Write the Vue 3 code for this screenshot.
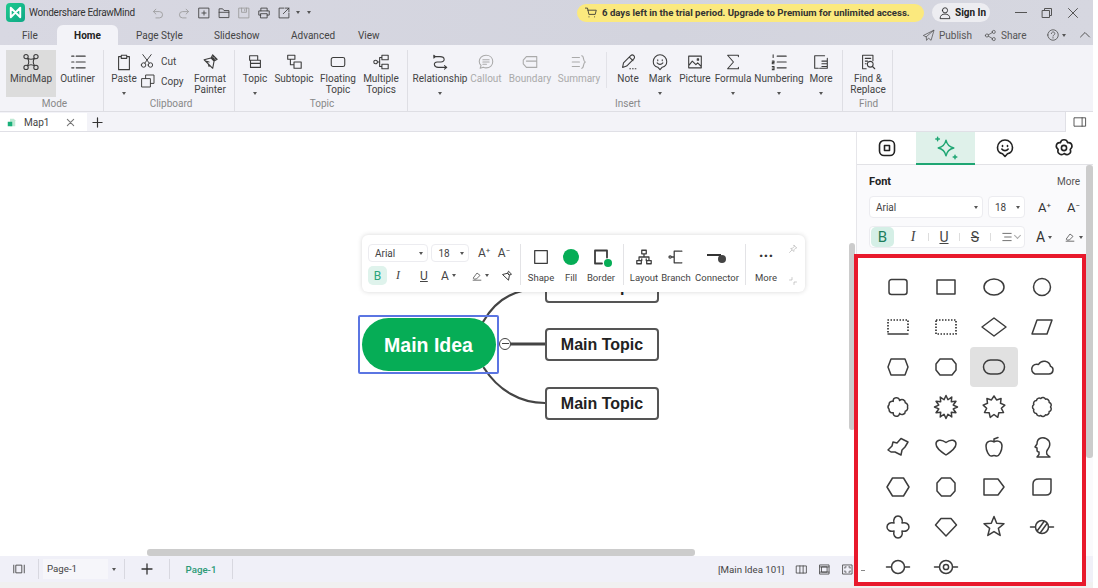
<script setup>
const c = (x, y, r) => `M${x - r} ${y}a${r} ${r} 0 1 0 ${2 * r} 0a${r} ${r} 0 1 0 ${-2 * r} 0z`
const p = {
  mindmap: c(4.5, 4, 2.4) + c(15.5, 4, 2.4) + c(4.5, 16, 2.4) + c(15.5, 16, 2.4) + 'M6.5 5.5C8 7.5 12 7.5 13.5 5.5M6.5 14.5C8 12.5 12 12.5 13.5 14.5M6 6C8 8 8 12 6 14M14 6C12 8 12 12 14 14',
  outliner: 'M8 3.5h10M8 10h10M8 16.5h10M3 3.5h2.5M3 10h2.5M3 16.5h2.5',
  paste: 'M7 4H4v14.5h12V4h-3M7 2.5h6v3.5H7z',
  scissors: c(4.5, 15, 2.8) + c(13, 15, 2.8) + 'M6 12.6L14 2M11.5 12.6L3.5 2',
  copy: 'M7 7V2.5h10.5V13H13M2.5 7H13v10.5H2.5z',
  painter: 'M13 2l5 5-3 1.5-3.5-3.5zM14 3.500l2.500 2.500-1.500 1-2-2zM11 5.500l3.500 3.500-1.500 8-9.500-9.500zM5 9l4 1M9 15l-1-3',
  topic: 'M4 3h9v5H4zM5 8h11v8H5zM5 11.5h11',
  subtopic: 'M3 2.5h8v4.5H3zM6 7v6h4M10 10h8v7h-8z',
  floating: 'M4.5 5h11a2 2 0 0 1 2 2v6a2 2 0 0 1-2 2h-11a2 2 0 0 1-2-2V7a2 2 0 0 1 2-2z',
  multiple: c(4, 10, 2) + 'M11 2.5h7v5h-7zM11 12.5h7v5h-7zM6 10h2.5M8.5 5v10M8.5 5H11M8.5 15H11',
  relation: 'M3 4h7c6 0 6 6 1 6H7c-5 0-4 6 1 6h9M15 14l2.5 2-2.5 2M3 2.5l2 1.5-2 1.5',
  callout: 'M10 2.5c4.5 0 7.5 3 7.5 7s-3 7-7.5 7c-1 0-2-.2-3-.6L3.5 17l1-3.2C3 12.5 2.5 11 2.5 9.5c0-4 3-7 7.5-7zM6.5 7.5h7M6.5 10h7M6.5 12.5h4',
  boundary: 'M6 4h11.5v12H6L2.5 12V8zM6 9h11.5',
  summary: 'M2.5 5h8M2.5 10h8M2.5 15h8M13 3c3 0 1 6 4 7-3 1-1 7-4 7',
  note: 'M4 16l1-5 8-8c1-1 2.5-1 3.5 0s1 2.5 0 3.5l-8 8zM11.5 4.5l4 4M12 17.5h.8M15 17.5h.8M18 17.5h.8',
  mark: 'M10 18.5l-2.5-2.7C4 15 2.5 12.5 2.5 9.5a7.5 7.5 0 0 1 15 0c0 3-1.5 5.5-5 6.3zM7.5 7.5v1M12.5 7.5v1M6.8 11c1.8 2.2 4.6 2.2 6.4 0',
  picture: 'M3 3.5h14v13H3zM3 14l4-5 4 4 2-2 4 4M12.5 6.5h1.5v1.5h-1.5z',
  formula: 'M16 4V2.5H4l6.5 7.5L4 17.5h12V16',
  numbering: 'M8 3.5h10M8 10h10M8 16.5h10M3.5 2v3M2.5 9h2v1.5h-2V12h2M2.5 15h2v3.5h-2M2.5 16.7h2',
  more: 'M14 3H3v14h4M8.5 17H17V6M11 9h6M11 12h6M11 15h6',
  find: 'M15.5 8.5V2.5H4v15h4M7 6h6M7 9h2.5M7 12h1' + c(12.5, 12.5, 3.2) + 'M15 15l2.5 2.5',
  undo: 'M4 8h8a4.5 4.5 0 0 1 0 9H7M7 4.5L3.5 8 7 11.5',
  redo: 'M16 8H8a4.5 4.5 0 0 0 0 9h5M13 4.5L16.5 8 13 11.5',
  newf: 'M3 3h14v14H3zM10 7v6M7 10h6',
  open: 'M3 16V4h5l2 2.5h7V16zM3 9h14',
  save: 'M3 3h14v14H3zM6.5 3v6h7V3M11 5v2',
  print: 'M5.5 7V3h9v4M5.5 13H2.5V7h15v6h-3M5.5 11h9v6h-9z',
  exp: 'M10 3H3v14h14v-7M9 11L17 3M12 3h5v5',
  cart: 'M2 3h3l2 9h9l1.5-6H5.5M7 15.5h.2M15 15.5h.2',
  user: c(10, 6.2, 3.7) + 'M3 17.5c0-4 3-6 7-6s7 2 7 6z',
  publish: 'M18 2L2 10l4.5 2 .5 5.5 3-3.5 3.5 3zM18 2L6.5 12',
  share: c(4.5, 10, 2.4) + c(15, 4.5, 2.4) + c(15, 15.5, 2.4) + 'M6.6 9l6.2-3.5M6.6 11l6.2 3.5',
  help: c(10, 10, 7.5) + 'M7.6 8c0-3.2 5-3.2 5 0 0 2-2.6 1.8-2.6 3.6M10 13.6v.8',
  pageList: 'M6 4.5h8v11H6zM2.5 4.5v11M17.5 4.5v11',
  book: 'M2.5 4.5h15v11h-15zM7.5 4.5v11M12.5 4.5v11',
  fit: 'M3 3h14v14H3zM6 6h8v8H6zM3 6h14M3 14h14',
  full: 'M3 3h14v14H3zM6 8V6h2M12 6h2v2M14 12v2h-2M8 14H6v-2',
  panel: 'M2 4h16v12H2zM13 4v12',
  tabShape: 'M7 2.5h6a4.5 4.5 0 0 1 4.5 4.5v6a4.5 4.5 0 0 1-4.5 4.5H7A4.5 4.5 0 0 1 2.5 13V7A4.5 4.5 0 0 1 7 2.5zM7.5 7.5h5v5h-5z',
  sparkle: 'M10 3.500c.8 3.800 2.700 5.700 6.500 6.500-3.800.8-5.700 2.700-6.500 6.500-.8-3.800-2.700-5.700-6.500-6.500 3.800-.8 5.700-2.700 6.500-6.500zM3 1v3M1.500 2.500h3M17.500 16v3M16 17.500h3',
  flower: 'M10 1.800c2 0 3.300 1.400 3.700 2.900 1.700-.3 3.600.5 4.100 2.400.6 1.900-.4 3.400-1.600 4.200.7 1.500.5 3.500-1.100 4.600-1.600 1.100-3.500.7-4.900-.4-1.200 1.100-3.100 1.500-4.700.4-1.600-1.100-1.900-3.100-1.300-4.600C3 10.500 1.900 9 2.400 7.100 3 5.200 4.800 4.400 6.400 4.700 6.800 3.200 8 1.800 10 1.800z' + c(10, 10, 2.6),
  shape: 'M3 3h14v14H3z',
  border: 'M4 3.500h12M4 3.500v13M16 3.500v7M4 16.500h7',
  layout: 'M7.500 2.500h5v4h-5zM2 14h5v3.500H2zM13 14h5v3.500h-5zM10 6.500V10M4.500 14v-4h11v4M7.500 14v-2M12.500 14v-2',
  branch: c(3.500, 10, 1.300) + 'M5 10h3M8 3.500v13M8 3.500h6M8 16.500h6M15 3.500h1.500M15 16.500h1.500',
  pin: 'M12 2.500l5.500 5.500-2.500.5-3 3-.5 3.500L5.500 9l3.500-.5 3-3zM8 12l-5 5',
  collapse: 'M3 8h5V3M12 17v-5h5',
  clear: 'M13 2.500l4.500 4.500-3 1.500-3-3zM11 6l3 3-1.500 8L3 8z',
  pen: 'M4 13l6-8 5 4-6 6H6zM3.500 17h13'
}

const star = (n, R, r) => {
  let s = ''
  for (let i = 0; i < n * 2; i++) {
    const a = -Math.PI / 2 + (i * Math.PI) / n
    const q = i % 2 ? r : R
    s += (i ? 'L' : 'M') + (q * Math.cos(a)).toFixed(2) + ' ' + (q * Math.sin(a)).toFixed(2)
  }
  return s + 'Z'
}
const scallop = (n, rx, ry, b) => {
  let s = ''
  for (let i = 0; i <= n; i++) {
    const a = (i * 2 * Math.PI) / n
    const pt = (rx * Math.cos(a)).toFixed(2) + ' ' + (ry * Math.sin(a)).toFixed(2)
    s += i ? `A${b} ${b} 0 0 1 ${pt}` : 'M' + pt
  }
  return s + 'Z'
}
const shapes = [
  { d: 'M-6.500-7.500h13a2.500 2.500 0 0 1 2.500 2.500v10a2.500 2.500 0 0 1-2.500 2.500h-13a2.500 2.500 0 0 1-2.500-2.500v-10a2.500 2.500 0 0 1 2.500-2.500z' },
  { d: 'M-9-7H9V7H-9z' },
  { d: 'M-10 0a10 8 0 1 0 20 0a10 8 0 1 0-20 0z' },
  { d: c(0, 0, 8.500) },
  { d: 'M-10 7H10', dash: 'M-10 5.500V-7H10V5.500' },
  { dash: 'M-10-7H10V7H-10z' },
  { d: 'M0-9L12 0 0 9-12 0z' },
  { d: 'M-10 7L-5-7H10L5 7z' },
  { d: 'M-10 0L-7-8H7L10 0 7 8H-7z' },
  { d: 'M-10-3L-6-8H6L10-3V3L6 8H-6L-10 3z' },
  { d: 'M-3.500-7h7a7 7 0 0 1 0 14h-7a7 7 0 0 1 0-14z', on: true },
  { d: 'M-7 7H7a4 4 0 0 0 1.500-7.700A6.500 6.500 0 0 0-3.500-2.500 4.800 4.800 0 0 0-7 7Z' },
  { d: scallop(9, 9.500, 6.500, 3.200) },
  { d: star(12, 11.500, 7.500) },
  { d: star(9, 11, 7.500) },
  { d: scallop(11, 8.500, 8.500, 2.800) },
  { d: 'M-10 3L-6-1-5-5-1-4 3-8.500 10-5 7 0 4 3 3 8-3 5-7 5Z' },
  { d: 'M0 8C-6 4-10 1-10-3-10-7-5-8.500 0-4.500 5-8.500 10-7 10-3 10 1 6 4 0 8Z' },
  { d: 'M0-5C-3-7-8-6-8-1-8 4-5 9-3 9-1.500 9-1 8.500 0 8.500 1 8.500 1.500 9 3 9 5 9 8 4 8-1 8-6 3-7 0-5ZM0-5V-8M0-8L4-9.500' },
  { d: 'M-5 10H8L5 7.500Q4 4 6 2 9-2 7-6 4-10-1-9-5-8-5-3L-7 0-5 1V3Q-5 5-3 5V7.500Z' },
  { d: 'M-11 0L-5.500-9H5.500L11 0 5.500 9H-5.500z' },
  { d: 'M-9-4L-4.500-9H4.500L9-4V4L4.500 9H-4.500L-9 4z' },
  { d: 'M-10-8H4L10 0 4 8H-10z' },
  { d: 'M-3-8H9V3Q9 8 4 8H-9V-3Q-9-8-3-8Z' },
  { d: 'M-4-4C-5-8-3-11 0-11 3-11 5-8 4-4 8-5 11-3 11 0 11 3 8 5 4 4 5 8 3 11 0 11-3 11-5 8-4 4-8 5-11 3-11 0-11-3-8-5-4-4Z' },
  { d: 'M-5-8.500H5L10.500-2 0 9-10.500-2Z' },
  { d: star(5, 10.500, 4.600) },
  { d: c(0, 0, 6.500) + 'M-11.500 0H-6.500M6.500 0H11.500M-4.500 3.500L2 -5.500M-1.500 5.500L5 -3.500' },
  { d: c(0, 0, 6.500) + 'M-11.500 0H-6.500M6.500 0H11.500' },
  { d: c(0, 0, 6.500) + c(0, 0, 2.600) + 'M-11.500 0H-6.500M6.500 0H11.500' }
]

const groups = [
  { label: 'Mode', w: 104, pad: 6, items: [
    { t: 'MindMap', w: 50, i: 'mindmap', active: true },
    { t: 'Outliner', w: 43, i: 'outliner' }
  ] },
  { label: 'Clipboard', w: 131, pad: 4, items: [
    { t: 'Paste', w: 32, i: 'paste', caret: true },
    { stack: true, w: 48 },
    { t: 'Format\nPainter', w: 44, i: 'painter' }
  ] },
  { label: 'Topic', w: 173, pad: 2, items: [
    { t: 'Topic', w: 36, i: 'topic', caret: true },
    { t: 'Subtopic', w: 42, i: 'subtopic' },
    { t: 'Floating\nTopic', w: 46, i: 'floating' },
    { t: 'Multiple\nTopics', w: 40, i: 'multiple' }
  ] },
  { label: 'Insert', w: 435, pad: 2, labelLeft: 205, items: [
    { t: 'Relationship', w: 60, i: 'relation', caret: true },
    { t: 'Callout', w: 32, i: 'callout', off: true },
    { t: 'Boundary', w: 56, i: 'boundary', off: true },
    { t: 'Summary', w: 42, i: 'summary', off: true },
    { sep: true },
    { t: 'Note', w: 32, i: 'note' },
    { t: 'Mark', w: 32, i: 'mark', caret: true },
    { t: 'Picture', w: 38, i: 'picture' },
    { t: 'Formula', w: 38, i: 'formula', caret: true },
    { t: 'Numbering', w: 54, i: 'numbering', caret: true },
    { t: 'More', w: 30, i: 'more', caret: true }
  ] },
  { label: 'Find', w: 50, pad: 2, items: [
    { t: 'Find &\nReplace', w: 46, i: 'find' }
  ] }
]
const tabs = ['Page Style', 'Slideshow', 'Advanced', 'View']
</script>

<template>
  <div class="app">
    <header class="title">
      <div class="row1">
        <div class="logo"><svg viewBox="0 0 20 20"><path d="M5 5l5 5 5-5v10l-5-5-5 5z" /></svg></div>
        <span class="appname">Wondershare EdrawMind</span>
        <div class="qa">
          <svg class="ic14 dim" viewBox="0 0 20 20"><path :d="p.undo" /></svg>
          <span class="dash"></span>
          <svg class="ic14 dim" viewBox="0 0 20 20"><path :d="p.redo" /></svg>
          <svg class="ic14" viewBox="0 0 20 20"><path :d="p.newf" /></svg>
          <svg class="ic14" viewBox="0 0 20 20"><path :d="p.open" /></svg>
          <svg class="ic14 dim" viewBox="0 0 20 20"><path :d="p.save" /></svg>
          <svg class="ic14" viewBox="0 0 20 20"><path :d="p.print" /></svg>
          <svg class="ic14" viewBox="0 0 20 20"><path :d="p.exp" /></svg>
          <i class="caret qc"></i>
          <i class="caret qc2"></i>
        </div>
        <div class="trial">
          <svg class="ic14 cart" viewBox="0 0 20 20"><path :d="p.cart" /></svg>
          <span>6 days left in the trial period. Upgrade to Premium for unlimited access.</span>
        </div>
        <div class="signin">
          <svg class="ic14 strong" viewBox="0 0 20 20"><path :d="p.user" /></svg>
          <span>Sign In</span>
        </div>
        <div class="win">
          <span class="min"></span>
          <svg class="ic12" viewBox="0 0 12 12"><path d="M1.500 3.500h7v7h-7zM3.500 3.500v-2h7v7h-2" /></svg>
          <svg class="ic12" viewBox="0 0 12 12"><path d="M1.500 1.500l9 9M10.500 1.500l-9 9" /></svg>
        </div>
      </div>
      <div class="row2">
        <span class="tab file">File</span>
        <span class="tab home">Home</span>
        <span v-for="t in tabs" :key="t" class="tab" :class="'t-' + t.slice(0, 2)">{{ t }}</span>
        <div class="actions">
          <span class="act"><svg class="ic13" viewBox="0 0 20 20"><path :d="p.publish" /></svg>Publish</span>
          <span class="act"><svg class="ic13" viewBox="0 0 20 20"><path :d="p.share" /></svg>Share</span>
          <span class="act help"><svg class="ic14" viewBox="0 0 20 20"><path :d="p.help" /></svg><i class="caret"></i></span>
          <svg class="ic12 up" viewBox="0 0 12 12"><path d="M1.500 8L6 3.500 10.500 8" /></svg>
        </div>
      </div>
    </header>

    <section class="ribbon">
      <div v-for="g in groups" :key="g.label" class="group" :style="{ width: g.w + 'px', paddingLeft: g.pad + 'px' }">
        <div class="items">
          <template v-for="(it, idx) in g.items" :key="idx">
            <span v-if="it.sep" class="vsep"></span>
            <div v-else-if="it.stack" class="stack" :style="{ width: it.w + 'px' }">
              <span><svg class="ic16" viewBox="0 0 20 20"><path :d="p.scissors" /></svg>Cut</span>
              <span><svg class="ic16" viewBox="0 0 20 20"><path :d="p.copy" /></svg>Copy</span>
            </div>
            <div v-else class="item" :class="{ active: it.active, off: it.off }" :style="{ width: it.w + 'px' }">
              <svg class="ric" viewBox="0 0 20 20"><path :d="p[it.i]" /></svg>
              <span class="lbl">{{ it.t }}</span>
              <i v-if="it.caret" class="caret rc"></i>
            </div>
          </template>
        </div>
        <div class="glabel" :style="{ paddingLeft: (g.labelLeft || 0) + 'px', textAlign: g.labelLeft ? 'left' : 'center' }">{{ g.label }}</div>
      </div>
    </section>

    <div class="docbar">
      <div class="doctab">
        <svg class="docic" viewBox="0 0 12 12"><path class="pg" d="M4 1h5l2 2v8H4z" /><path class="pf" d="M1 5h6v6H1z" /></svg>
        <span class="docname">Map1</span>
        <svg class="ic9" viewBox="0 0 10 10"><path d="M1.500 1.500l7 7M8.500 1.500l-7 7" /></svg>
      </div>
      <svg class="plus" viewBox="0 0 12 12"><path d="M6 1v10M1 6h10" /></svg>
      <div class="panelbtn"><svg class="ic14" viewBox="0 0 20 20"><path :d="p.panel" /></svg></div>
    </div>

    <div class="main">
      <div class="canvas">
        <svg class="links" viewBox="0 0 856 424">
          <path d="M483 190C492 174 505 163 522 159" />
          <path d="M510 212H545" class="thick" />
          <path d="M484 236C498 258 520 271 545 271" />
        </svg>
        <div class="sel"><div class="root">Main Idea</div></div>
        <div class="node n1">Main Topic</div>
        <div class="node n2">Main Topic</div>
        <div class="node n3">Main Topic</div>
        <div class="minus"></div>

        <div class="float">
          <div class="f-left">
            <div class="f-row">
              <span class="sel-box fa">Arial<i class="caret"></i></span>
              <span class="sel-box fb">18<i class="caret"></i></span>
              <span class="aa">A<sup>+</sup></span>
              <span class="aa">A<sup>−</sup></span>
            </div>
            <div class="f-row r2">
              <span class="bold-b small">B</span>
              <span class="fmt i">I</span>
              <span class="fmt u">U</span>
              <span class="fmt a">A<i class="caret"></i></span>
              <span class="fmt penw"><svg class="ic12s" viewBox="0 0 20 20"><path :d="p.pen" /></svg><i class="caret"></i></span>
              <svg class="ic12s clr" viewBox="0 0 20 20"><path :d="p.clear" /></svg>
            </div>
          </div>
          <span class="fsep"></span>
          <div class="tool w30"><svg class="tic" viewBox="0 0 20 20"><path :d="p.shape" /></svg><span>Shape</span></div>
          <div class="tool w30"><span class="fill"></span><span>Fill</span></div>
          <div class="tool w30"><span class="bwrap"><svg class="tic bold2" viewBox="0 0 20 20"><path :d="p.border" /></svg><b class="bdot"></b></span><span>Border</span></div>
          <span class="fsep s2"></span>
          <div class="tool w32"><svg class="tic" viewBox="0 0 20 20"><path :d="p.layout" /></svg><span>Layout</span></div>
          <div class="tool w32"><svg class="tic" viewBox="0 0 20 20"><path :d="p.branch" /></svg><span>Branch</span></div>
          <div class="tool w50">
            <span class="conn"><b class="cline"></b><b class="cdot"></b></span><span>Connector</span>
          </div>
          <span class="fsep s3"></span>
          <div class="tool w36"><span class="dots">···</span><span>More</span></div>
          <div class="pins">
            <svg class="ic10" viewBox="0 0 20 20"><path :d="p.pin" /></svg>
            <svg class="ic10" viewBox="0 0 20 20"><path :d="p.collapse" /></svg>
          </div>
        </div>

        <div class="vscroll"></div>
        <div class="hscroll"></div>
      </div>

      <aside class="side">
        <div class="side-tabs">
          <div class="stab"><svg class="sic" viewBox="0 0 20 20"><path :d="p.tabShape" /></svg></div>
          <div class="stab on"><svg class="sic" viewBox="0 0 20 20"><path :d="p.sparkle" /></svg></div>
          <div class="stab"><svg class="sic" viewBox="0 0 20 20"><path :d="p.mark" /></svg></div>
          <div class="stab"><svg class="sic" viewBox="0 0 20 20"><path :d="p.flower" /></svg></div>
        </div>
        <div class="side-body">
          <div class="font-head"><b>Font</b><span>More</span></div>
          <div class="font-row">
            <span class="sel-box sa">Arial<i class="caret"></i></span>
            <span class="sel-box sb">18<i class="caret"></i></span>
            <span class="aa big">A<sup>+</sup></span>
            <span class="aa big">A<sup>−</sup></span>
          </div>
          <div class="font-row r2">
            <div class="fmtbox">
              <span class="bold-b">B</span>
              <span class="fs i">I</span><em></em>
              <span class="fs u">U</span><em></em>
              <span class="fs s">S</span><em></em>
              <svg class="ic12s al" viewBox="0 0 20 20"><path d="M3 4h14M6 10h11M3 16h14" /></svg><i class="chev"></i>
            </div>
            <span class="fmtA">A<i class="caret"></i></span>
            <span class="fmtP"><svg class="ic12s" viewBox="0 0 20 20"><path :d="p.pen" /></svg><i class="caret"></i></span>
          </div>
        </div>
        <div class="side-scroll"></div>
      </aside>
    </div>

    <footer class="status">
      <svg class="ic14 st1" viewBox="0 0 20 20"><path :d="p.pageList" /></svg>
      <span class="ssep"></span>
      <div class="pagesel">Page-1</div>
      <i class="caret pc"></i>
      <span class="ssep"></span>
      <svg class="plus small" viewBox="0 0 12 12"><path d="M6 1v10M1 6h10" /></svg>
      <span class="ssep"></span>
      <span class="pagetab">Page-1</span>
      <span class="ssep"></span>
      <div class="sright">
        <span>[Main Idea 101]</span>
        <svg class="ic13" viewBox="0 0 20 20"><path :d="p.book" /></svg>
        <svg class="ic13" viewBox="0 0 20 20"><path :d="p.fit" /></svg>
        <svg class="ic13" viewBox="0 0 20 20"><path :d="p.full" /></svg>
      </div>
    </footer>
    <div class="strip"></div>

    <div class="redbox">
      <span class="tick"></span>
      <div class="shapes">
        <div v-for="(s, i) in shapes" :key="i" class="cell" :class="{ on: s.on }">
          <svg viewBox="-16 -16 32 32">
            <path v-if="s.d" :d="s.d" />
            <path v-if="s.dash" class="dotted" :d="s.dash" />
          </svg>
        </div>
      </div>
    </div>
  </div>
</template>

<style>
html, body { margin: 0; background: #fff; }
</style>

<style scoped>
.app {
  position: relative;
  width: 1093px;
  height: 588px;
  overflow: hidden;
  background: #fff;
  font-family: Roboto, "Open Sans", sans-serif;
  font-size: 10px;
  color: #444;
}
svg { display: block; flex: none; }
path { fill: none; stroke: #3c3c3c; stroke-width: 1.200; stroke-linejoin: round; stroke-linecap: round; }
.caret {
  display: inline-block;
  width: 0; height: 0;
  border-left: 2.500px solid transparent;
  border-right: 2.500px solid transparent;
  border-top: 3px solid #555;
  flex: none;
}

.title {
  height: 45px;
  background: linear-gradient(90deg, #d8d8e2, #d3d4de 60%, #d6d7e0);
}
.row1 { height: 25px; display: flex; align-items: center; position: relative; }
.logo {
  width: 19px; height: 19px; margin: 0 4px 0 6px; border-radius: 4px;
  background: linear-gradient(135deg, #1fc98e, #0fa886);
}
.logo svg { width: 19px; height: 19px; }
.logo path { stroke: #fff; stroke-width: 2; }
.appname { font-size: 10px; letter-spacing: -0.250px; color: #333; width: 116px; white-space: nowrap; }
.qa { display: flex; align-items: center; width: 164px; padding-left: 6px; box-sizing: border-box; }
.ic14 { width: 14px; height: 14px; }
.ic13 { width: 13px; height: 13px; }
.ic12 { width: 12px; height: 12px; }
.ic16 { width: 16px; height: 16px; }
.ic9 { width: 9px; height: 9px; }
.ic10 { width: 10px; height: 10px; }
.ic12s { width: 12px; height: 12px; }
.qa .ic14 { margin-right: 6px; }
.qa .dim path { stroke: #999; }
.dash { width: 5px; height: 1px; background: #aaa; margin: 0 7px 0 -1px; }
.qc { margin: 0 7px 0 -1px; }
.trial {
  margin-left: 268px;
  width: 347px; height: 18px; border-radius: 9px; background: #fbe97e;
  display: flex; align-items: center; gap: 4px; padding-left: 7px; box-sizing: border-box;
  font-size: 9.600px; font-weight: 700; color: #333; white-space: nowrap;
}
.cart path { stroke: #333; }
.signin {
  margin-left: 8px; width: 58px; height: 19px; border-radius: 10px; background: #ededf1;
  display: flex; align-items: center; gap: 3px; padding-left: 6px; box-sizing: border-box;
  font-size: 10px; font-weight: 700; color: #222; white-space: nowrap;
}
.strong path { stroke: #222; }
.win { display: flex; align-items: center; gap: 14px; margin-left: 25px; }
.min { width: 12px; height: 1px; background: #555; }
.win path, .up path { stroke: #555; stroke-width: 1; }

.row2 { height: 20px; display: flex; align-items: stretch; position: relative; font-size: 10px; }
.tab { display: flex; align-items: center; color: #444; white-space: nowrap; }
.file { margin-left: 22px; width: 35px; }
.home {
  width: 61px; justify-content: center; font-weight: 700; color: #222;
  background: #f3f3f8; border-radius: 6px 6px 0 0;
}
.t-Pa { margin-left: 18px; width: 78px; }
.t-Sl { width: 77px; }
.t-Ad { width: 67px; }
.t-Vi { width: 50px; }
.actions { position: absolute; left: 922px; top: 0; height: 20px; display: flex; align-items: center; color: #555; }
.act { display: flex; align-items: center; gap: 4px; margin-right: 12px; white-space: nowrap; }
.act path { stroke: #555; }
.help { gap: 2px; margin-right: 13px; margin-left: 8px; }

.ribbon {
  height: 67px; display: flex; background: #f3f3f8; border-bottom: 1px solid #dedee4; box-sizing: border-box;
}
.group {
  box-sizing: border-box; flex: none; height: 61px; margin-top: 5px;
  border-right: 1px solid #dedee4;
  display: flex; flex-direction: column;
}
.items { display: flex; height: 47px; }
.item {
  flex: none; display: flex; flex-direction: column; align-items: center; height: 47px; box-sizing: border-box;
  padding-top: 3px;
}
.item.active { background: #dcdcdc; }
.ric { width: 18px; height: 18px; margin-bottom: 1px; }
.lbl { white-space: pre; text-align: center; line-height: 11px; margin-top: 1px; color: #444; }
.off .lbl { color: #aaa; }
.off path { stroke: #aaa; }
.rc { margin-top: auto; margin-bottom: 2px; }
.stack { display: flex; flex-direction: column; gap: 4px; padding-top: 3px; box-sizing: border-box; }
.stack span { display: flex; align-items: center; gap: 5px; height: 16px; }
.vsep { width: 1px; height: 36px; margin: 2px 5px 0 6px; background: #e2e2e8; flex: none; }
.glabel { color: #888; line-height: 12px; margin-top: 1px; }

.docbar {
  height: 20px; background: #f3f3f8; border-bottom: 1px solid #e0e0e6; box-sizing: border-box;
  display: flex; align-items: flex-end; position: relative;
}
.doctab {
  width: 87px; height: 18px; background: #fff; display: flex; align-items: center; box-sizing: border-box; padding-left: 7px;
}
.docic { width: 9px; height: 9px; }
.docic path { stroke: none; }
.docic .pg { fill: #bfe9d4; }
.docic .pf { fill: #19b07a; }
.docname { margin-left: 8px; width: 42px; }
.ic9 path { stroke: #777; }
.plus { width: 11px; height: 11px; margin: 0 0 3px 5px; }
.plus path { stroke: #333; stroke-width: 1.300; }
.panelbtn {
  position: absolute; right: 0; top: 0; width: 28px; height: 20px; background: #fff; border-left: 1px solid #e0e0e6;
  display: flex; align-items: center; justify-content: center; box-sizing: border-box;
}

.main { height: 424px; display: flex; }
.canvas { position: relative; width: 856px; flex: none; overflow: hidden; background: #fff; }
.links { position: absolute; left: 0; top: 0; width: 856px; height: 424px; }
.links path { stroke: #444; stroke-width: 2.200; }
.links .thick { stroke-width: 2.800; }
.sel {
  position: absolute; left: 358px; top: 183px; width: 141px; height: 59px; box-sizing: border-box;
  border: 2px solid #5b75e2; border-radius: 2px; display: flex; align-items: center; justify-content: center;
}
.root {
  width: 134px; height: 53px; border-radius: 27px; background: #06ad56; color: #fff; padding-top: 1px; box-sizing: border-box;
  font: 700 19.500px "Liberation Sans", Arial, sans-serif;
  display: flex; align-items: center; justify-content: center;
}
.node {
  position: absolute; left: 545px; width: 114px; height: 33px; box-sizing: border-box; padding-top: 1px;
  border: 2px solid #555; border-radius: 4px; background: #fff; color: #222;
  font: 700 16px "Liberation Sans", Arial, sans-serif;
  display: flex; align-items: center; justify-content: center;
}
.n1 { top: 138px; }
.n2 { top: 196px; }
.n3 { top: 255px; }
.minus {
  position: absolute; left: 499px; top: 206px; width: 12px; height: 12px; box-sizing: border-box;
  border: 1.500px solid #444; border-radius: 50%; background: #fff;
}
.minus::after { content: ""; position: absolute; left: 1.500px; right: 1.500px; top: 3.500px; height: 1.500px; background: #444; }

.float {
  position: absolute; left: 362px; top: 103px; width: 443px; height: 57px; box-sizing: border-box;
  background: #fff; border-radius: 6px; box-shadow: 0 0 5px rgba(0,0,0,.16);
  display: flex; align-items: flex-start; padding: 9px 0 0 6px;
  font-size: 9.500px;
}
.f-left { width: 146px; flex: none; }
.f-row { display: flex; align-items: center; height: 18px; }
.f-row.r2 { margin-top: 4px; height: 19px; }
.sel-box {
  display: flex; align-items: center; justify-content: space-between; box-sizing: border-box;
  border: 1px solid #ececf0; border-radius: 4px; padding: 0 4px 0 6px; color: #444; background: #fff;
  font-size: 10px;
}
.fa { width: 63px; height: 18px; margin-right: 3px; }
.fb { width: 39px; height: 18px; margin-right: 5px; }
.aa { width: 21px; font-size: 12px; text-align: center; color: #444; white-space: nowrap; }
.aa sup { font-size: 8px; line-height: 0; vertical-align: 4px; }
.bold-b {
  width: 23px; height: 20px; border-radius: 5px; background: #d5efe6; color: #1e7d5c;
  display: flex; align-items: center; justify-content: center; font-size: 15px; flex: none;
}
.bold-b.small { width: 19px; height: 19px; font-size: 12px; color: #2aa47b; background: #dff3ec; margin-right: 9px; }
.fmt { display: flex; align-items: center; gap: 3px; font-size: 12px; color: #444; }
.fmt.i { font-family: "Liberation Serif", serif; font-style: italic; width: 24px; }
.fmt.u { text-decoration: underline; width: 21px; }
.fmt.a { width: 30px; }
.fmt.penw { width: 30px; gap: 2px; }
.clr path { stroke: #333; stroke-width: 1.600; }
.fsep { width: 1px; height: 41px; background: #e3e3e6; margin: 0 5px 0 6px; flex: none; }
.fsep.s2 { margin-left: 7px; margin-right: 4px; }
.fsep.s3 { margin-left: 3px; margin-right: 2px; }
.tool { display: flex; flex-direction: column; align-items: center; flex: none; height: 39px; justify-content: space-between; white-space: nowrap; color: #444; }
.w30 { width: 30px; }
.w32 { width: 32px; }
.w50 { width: 50px; }
.w36 { width: 36px; }
.tic { width: 18px; height: 18px; margin-top: 4px; }
.tic path { stroke-width: 1.400; }
.fill { width: 16px; height: 16px; border-radius: 50%; background: #06ad56; margin-top: 5px; }
.bwrap { position: relative; width: 20px; height: 20px; margin-top: 3px; }
.tic.bold2 { width: 20px; height: 20px; margin-top: 0; }
.bold2 path { stroke-width: 1.800; }
.bdot { position: absolute; right: -1px; bottom: 0; width: 8px; height: 8px; border-radius: 50%; background: #06ad56; }
.conn { position: relative; width: 24px; height: 20px; margin-top: 3px; }
.cline { position: absolute; left: 2px; top: 7px; width: 14px; height: 2px; background: #333; }
.cdot { position: absolute; left: 13px; top: 8px; width: 8px; height: 8px; background: #444; border-radius: 50%; }
.dots { font-size: 16px; line-height: 20px; margin-top: 2px; font-weight: 700; color: #333; }
.pins { display: flex; flex-direction: column; justify-content: space-between; height: 42px; margin-left: 4px; }
.pins path { stroke: #aaa; }

.vscroll { position: absolute; left: 849px; top: 111px; width: 6px; height: 187px; border-radius: 3px; background: #ccc; }
.hscroll { position: absolute; left: 147px; top: 417px; width: 548px; height: 7px; border-radius: 3px; background: #ccc; }

.side { position: relative; flex: 1; border-left: 1px solid #e6e6ea; box-sizing: border-box; background: #fff; }
.side-tabs { height: 33px; display: flex; border-bottom: 1px solid #e2e2e6; box-sizing: border-box; }
.stab { width: 59px; display: flex; align-items: center; justify-content: center; box-sizing: border-box; }
.stab.on { background: #dff1ea; border-bottom: 2px solid #1fa673; height: 33px; }
.sic { width: 20px; height: 20px; }
.sic path { stroke: #222; stroke-width: 1.600; }
.on .sic { width: 24px; height: 24px; }
.on .sic path { stroke: #1fa673; stroke-width: 1.200; }
.side-body { background: #fafafc; height: 391px; padding: 8px 0 0 12px; box-sizing: border-box; }
.font-head { display: flex; justify-content: space-between; align-items: center; width: 211px; height: 16px; font-size: 11px; color: #333; }
.font-head b { color: #222; font-weight: 700; }
.font-head span { font-size: 10px; color: #555; }
.font-row { display: flex; align-items: center; margin-top: 7px; height: 22px; font-size: 10px; }
.font-row.r2 { margin-top: 8px; }
.sa { width: 114px; height: 22px; margin-right: 5px; }
.sb { width: 37px; height: 22px; margin-right: 5px; }
.aa.big { width: 29px; font-size: 13px; color: #333; }
.fmtbox {
  width: 156px; height: 22px; box-sizing: border-box; border: 1px solid #ececf0; border-radius: 4px; background: #fff;
  display: flex; align-items: center; padding-left: 1px;
}
.fs { font-size: 14px; color: #444; width: 30px; text-align: center; }
.fmtbox em { width: 1px; height: 8px; background: #ddd; flex: none; }
.fs.i { font-family: "Liberation Serif", serif; font-style: italic; margin-left: 4px; }
.fs.u { text-decoration: underline; }
.fs.s { text-decoration: line-through; }
.al { margin-left: 10px; }
.chev { width: 4px; height: 4px; border-right: 1px solid #aaa; border-bottom: 1px solid #aaa; transform: rotate(45deg); margin: -3px 0 0 2px; }
.fmtA { display: flex; align-items: center; gap: 3px; font-size: 14px; margin-left: 11px; color: #333; }
.fmtP { display: flex; align-items: center; gap: 3px; margin-left: 12px; }
.side-scroll { position: absolute; right: 0; top: 33px; width: 7px; height: 293px; border-radius: 3px; background: #ccc; }

.status { height: 26px; background: #f0f0f8; display: flex; align-items: center; color: #444; font-size: 9.700px; }
.st1 { margin: 0 12px; }
.ssep { width: 1px; height: 20px; background: #d8d8e0; flex: none; }
.pagesel { width: 65px; height: 20px; margin-left: 4px; background: #f6f6fa; line-height: 20px; padding-left: 4px; box-sizing: border-box; }
.pc { margin: 0 8px 0 4px; }
.plus.small { margin: 0 16px; width: 12px; height: 12px; }
.pagetab { width: 62px; text-align: center; color: #2b9a76; font-weight: 500; }
.sright { margin-left: auto; width: 375px; display: flex; align-items: center; gap: 10px; }
.sright span { margin-right: 1px; }
.strip { height: 6px; background: #f0f0f0; }

.redbox {
  position: absolute; left: 854px; top: 254px; width: 232px; height: 332px; box-sizing: border-box;
  border: 4px solid #e8192c; background: #fff;
}
.tick { position: absolute; left: 3px; top: 312px; width: 4px; height: 1px; background: #888; }
.shapes { display: grid; grid-template-columns: repeat(4, 48px); grid-auto-rows: 40px; padding: 9px 0 0 16px; }
.cell { display: flex; align-items: center; justify-content: center; border-radius: 4px; }
.cell.on { background: #e1e1e1; }
.cell svg { width: 32px; height: 32px; }
.cell path { stroke-width: 1.500; }
.cell path.dotted { stroke-width: 1.700; stroke: #333; stroke-dasharray: 1.500 1.500; stroke-linecap: butt; }
</style>
